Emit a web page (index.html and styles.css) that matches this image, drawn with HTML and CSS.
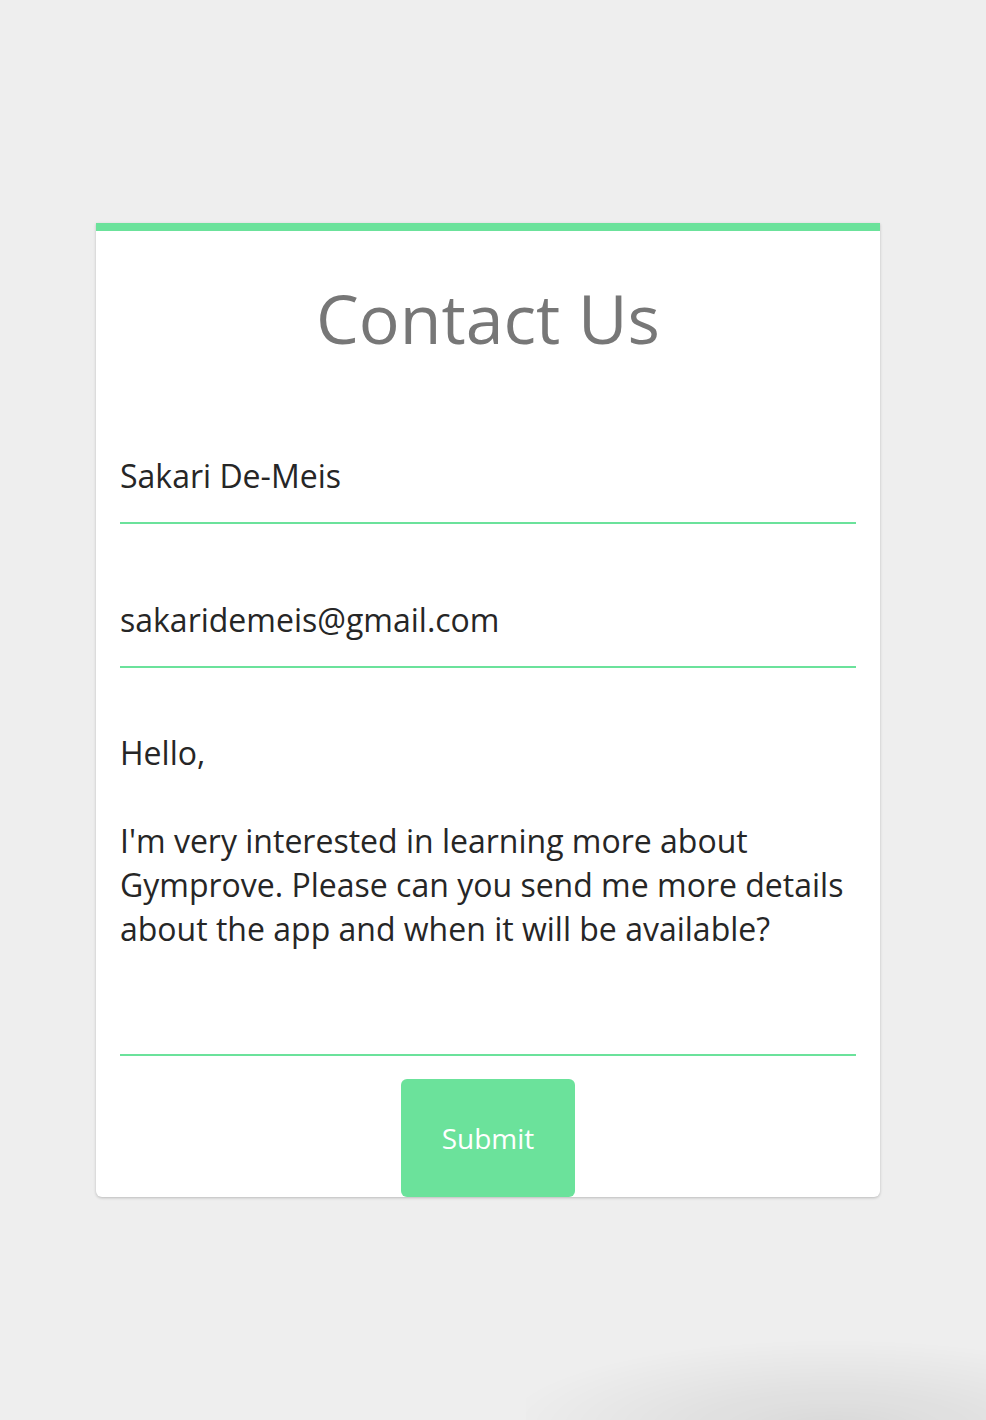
FILE: index.html
```html
<!DOCTYPE html>
<html lang="en">
<head>
<meta charset="utf-8">
<title>Contact Us</title>
<link rel="stylesheet" href="styles.css">
</head>
<body>
<main class="card">
  <h1 class="title">Contact Us</h1>
  <form class="form">
    <input class="field field-name" type="text" value="Sakari De-Meis">
    <input class="field field-email" type="email" value="sakaridemeis@gmail.com">
    <textarea class="field field-message">Hello,

I'm very interested in learning more about Gymprove. Please can you send me more details about the app and when it will be available?</textarea>
    <button class="submit" type="button">Submit</button>
  </form>
</main>
<div class="corner-shade"></div>
</body>
</html>
```

FILE: styles.css
```css
html, body {
  margin: 0;
  padding: 0;
}

body {
  background: #eeeeee;
  font-family: "Open Sans", "Noto Sans", sans-serif;
  min-height: 1420px;
  overflow: hidden;
}

.card {
  box-sizing: border-box;
  width: 784px;
  margin: 223px 0 0 96px;
  padding: 0 24px;
  background: #ffffff;
  border-top: 8px solid #6be29b;
  border-radius: 0 0 6px 6px;
  box-shadow: 0 1px 3px rgba(0, 0, 0, 0.22);
}

.title {
  margin: 0;
  padding-top: 40px;
  height: 93px;
  font-size: 68px;
  font-weight: 400;
  line-height: 93px;
  color: #777777;
  text-align: center;
}

.form {
  display: flex;
  flex-direction: column;
  align-items: stretch;
}

.field {
  display: block;
  box-sizing: border-box;
  width: 100%;
  margin: 0;
  border: none;
  border-bottom: 2px solid #6be29b;
  border-radius: 0;
  background: transparent;
  outline: none;
  font-family: "Open Sans", "Noto Sans", sans-serif;
  font-size: 32px;
  line-height: 44px;
  color: #262626;
}

.field-name,
.field-email {
  height: 95px;
  padding: 24px 0 25px 0;
}

.field-name {
  margin-top: 65px;
}

.field-email {
  margin-top: 49px;
}

.field-message {
  margin-top: 39px;
  height: 349px;
  padding: 24px 0;
  resize: none;
  overflow: hidden;
}

.submit {
  align-self: center;
  width: 174px;
  height: 118px;
  margin-top: 23px;
  border: none;
  border-radius: 6px;
  background: #6be29b;
  color: #ffffff;
  font-family: "Open Sans", "Noto Sans", sans-serif;
  font-size: 28px;
  cursor: pointer;
}

.corner-shade {
  position: fixed;
  right: -100px;
  bottom: 0;
  width: 560px;
  height: 90px;
  background: radial-gradient(ellipse 60% 100% at 55% 110%, rgba(0, 0, 0, 0.09), rgba(0, 0, 0, 0) 100%);
  pointer-events: none;
}
```
